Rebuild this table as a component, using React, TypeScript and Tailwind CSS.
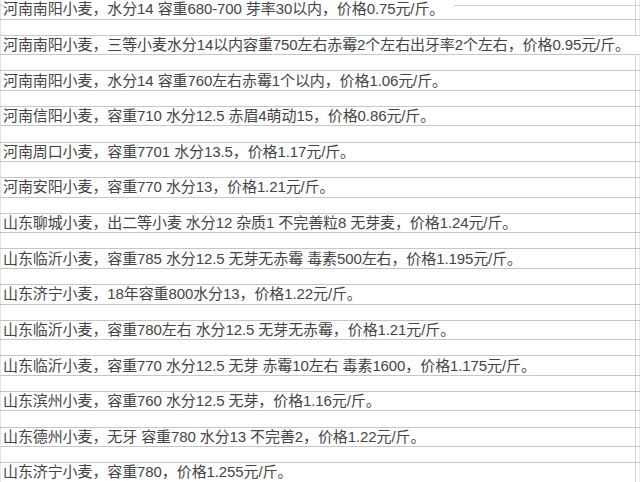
import React from "react";

const rows = [
  "河南南阳小麦，水分14 容重680-700 芽率30以内，价格0.75元/斤。",
  "河南南阳小麦，三等小麦水分14以内容重750左右赤霉2个左右出牙率2个左右，价格0.95元/斤。",
  "河南南阳小麦，水分14 容重760左右赤霉1个以内，价格1.06元/斤。",
  "河南信阳小麦，容重710 水分12.5 赤眉4萌动15，价格0.86元/斤。",
  "河南周口小麦，容重7701 水分13.5，价格1.17元/斤。",
  "河南安阳小麦，容重770 水分13，价格1.21元/斤。",
  "山东聊城小麦，出二等小麦 水分12 杂质1 不完善粒8 无芽麦，价格1.24元/斤。",
  "山东临沂小麦，容重785 水分12.5 无芽无赤霉 毒素500左右，价格1.195元/斤。",
  "山东济宁小麦，18年容重800水分13，价格1.22元/斤。",
  "山东临沂小麦，容重780左右 水分12.5 无芽无赤霉，价格1.21元/斤。",
  "山东临沂小麦，容重770 水分12.5 无芽 赤霉10左右 毒素1600，价格1.175元/斤。",
  "山东滨州小麦，容重760 水分12.5 无芽，价格1.16元/斤。",
  "山东德州小麦，无牙 容重780 水分13 不完善2，价格1.22元/斤。",
  "山东济宁小麦，容重780，价格1.255元/斤。",
];

export default function App() {
  return (
    <div
      className="relative w-[640px] h-[482px] overflow-hidden bg-white text-[#444444]"
      style={{ fontFamily: '"Liberation Sans", "Noto Sans CJK SC", sans-serif' }}
    >
      <div className="absolute left-0 top-0 bottom-0 w-px bg-[#e4e4e4]" />
      <div className="absolute left-[635px] top-0 bottom-0 w-px bg-[#d6d6d6]" />
      <div className="absolute left-[639px] top-0 bottom-0 w-px bg-[#ececec]" />
      <div className="absolute left-0 right-0 top-[5px] h-px bg-[#d0d0d0]" />
      <div className="relative flex flex-col mt-[-0.9px]">
        {rows.map((t, i) => (
          <div key={i} className="flex flex-col h-[35.63px] shrink-0">
            <div className="h-[20.5px] border-y border-[#c6c6c6] flex items-center pl-[3px]">
              <span className="inline-block h-[18px] bg-white pr-[10px] text-[15px] leading-[18px] whitespace-nowrap tracking-[-0.1px]">
                {t}
              </span>
            </div>
          </div>
        ))}
      </div>
    </div>
  );
}
